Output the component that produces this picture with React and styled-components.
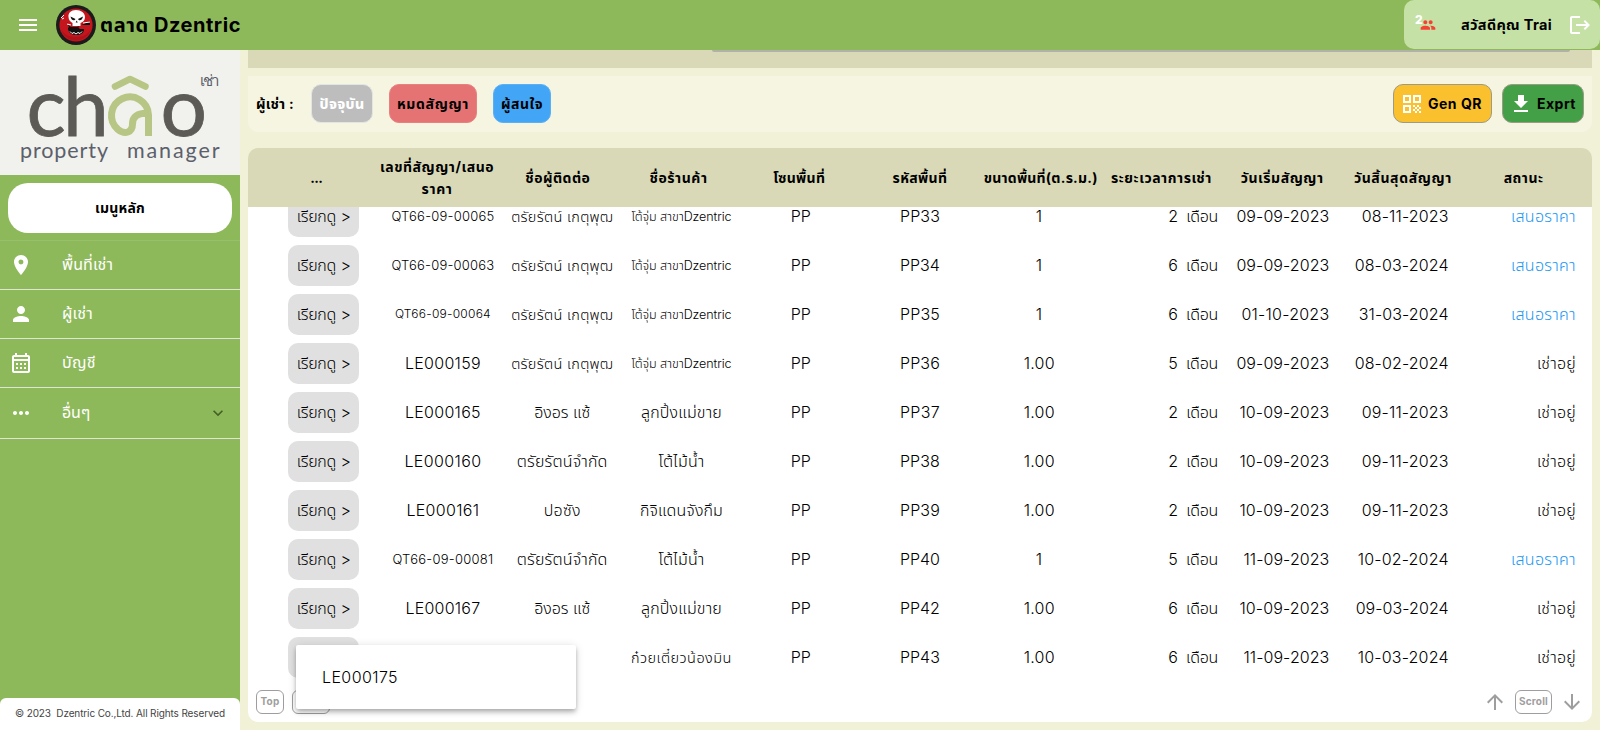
import React, { useLayoutEffect, useRef, useState } from 'react';
import styled, { createGlobalStyle } from 'styled-components';
import {
  MdMenu, MdLocationOn, MdPerson, MdOutlineCalendarMonth, MdMoreHoriz, MdExpandMore,
  MdPeople, MdLogout, MdQrCode, MdDownload, MdArrowUpward, MdArrowDownward,
} from 'react-icons/md';

const Global = createGlobalStyle`
  * { box-sizing: border-box; }
  body {
    margin: 0;
    background: #f1f1d7;
    font-family: Inter, "Noto Sans Thai", "Noto Sans", sans-serif;
    color: #000;
    overflow: hidden;
  }
`;

/* Text that tightens or loosens its tracking to fill the given width. */
const Tracked = styled.span`
  display: inline-block;
  white-space: pre;
  font-size: ${(p) => p.$size || 16}px;
  font-weight: ${(p) => p.$weight || 300};
  color: ${(p) => p.$color || 'inherit'};
  line-height: ${(p) => p.$line || 1.2};
`;

function Text({ w, size, weight, color, line, children }) {
  const ref = useRef(null);
  const [gap, setGap] = useState(0);
  useLayoutEffect(() => {
    if (!w) return;
    const el = ref.current;
    el.style.letterSpacing = '0px';
    const base = el.getBoundingClientRect().width;
    el.style.letterSpacing = '1px';
    const slope = el.getBoundingClientRect().width - base;
    const next = slope > 0 ? (w - base) / slope : 0;
    el.style.letterSpacing = `${next}px`;
    setGap(next);
  }, [w, children, size, weight]);
  return (
    <Tracked ref={ref} $size={size} $weight={weight} $color={color} $line={line}
      style={{ letterSpacing: `${gap}px` }}>
      {children}
    </Tracked>
  );
}

const Page = styled.div`
  display: flex;
  flex-direction: column;
  width: 1600px;
  height: 730px;
  overflow: hidden;
`;

const TopBar = styled.header`
  display: flex;
  align-items: center;
  height: 50px;
  flex: none;
  padding-left: 16px;
  background: #8eb95b;
  color: #fff;
`;

const Brand = styled.div`
  display: flex;
  align-items: center;
  gap: 4px;
  margin-left: 16px;
  color: #000;
`;

const UserBox = styled.div`
  display: flex;
  align-items: center;
  align-self: flex-start;
  width: 196px;
  height: 49px;
  margin-left: auto;
  padding: 0 8px 0 11px;
  border-radius: 10px;
  background: #c5e1a5;
  color: #000;
`;

const Online = styled.div`
  display: flex;
  align-items: center;
  width: 46px;
  color: #fff;
  svg { color: #f44336; }
`;

const Count = styled.span`
  width: 5px;
  margin-bottom: 10px;
  font-size: 12px;
  font-weight: 800;
`;

const LogoutSlot = styled.div`
  display: flex;
  margin-left: auto;
  color: #fff;
`;

const Body = styled.div`
  display: flex;
  flex: 1;
  min-height: 0;
`;

const Sidebar = styled.aside`
  display: flex;
  flex-direction: column;
  width: 240px;
  flex: none;
  background: #8eb95b;
`;

const LogoPanel = styled.div`
  height: 125px;
  background: #f1f2ed;
`;

const MainMenu = styled.div`
  display: flex;
  align-items: center;
  justify-content: center;
  height: 50px;
  margin: 8px 8px 7px;
  padding-top: 1px;
  border-radius: 20px;
  background: #fff;
`;

const NavItem = styled.div`
  display: flex;
  align-items: center;
  height: ${(p) => p.$height || 49}px;
  padding: 0 13px 0 12px;
  border-bottom: 1px solid #dfe6d5;
  color: #fff;
`;

const NavIcon = styled.div`
  display: flex;
  justify-content: center;
  width: 24px;
  margin: 0 29px 1px -3px;
`;

const NavArrow = styled.div`
  display: flex;
  margin-left: auto;
  margin-right: -1px;
  color: #456026;
`;

const NavList = styled.nav`
  border-top: 1px solid #98c06a;
`;

const Copyright = styled.footer`
  display: flex;
  align-items: center;
  height: 32px;
  margin-top: auto;
  padding: 0 0 2px 15px;
  border-radius: 6px 6px 0 0;
  background: #fff;
`;

const Content = styled.main`
  display: flex;
  flex-direction: column;
  flex: 1;
  min-width: 0;
  padding: 0 8px 8px;
`;

const SearchStrip = styled.div`
  display: flex;
  justify-content: flex-end;
  height: 17.5px;
  padding-right: 22px;
  background: #d9d9b7;
`;

const SearchEdge = styled.div`
  width: 858px;
  height: 1.5px;
  border-radius: 0 0 4px 4px;
  background: #b0b2a8;
`;

const FilterBar = styled.section`
  display: flex;
  align-items: center;
  height: 56px;
  margin-top: 8px;
  padding: 0 8px;
  border-radius: 0 0 10px 10px;
  background: #f6f5e2;
`;

const FilterLabel = styled.div`
  display: flex;
  padding-top: 2px;
`;

const Chips = styled.div`
  display: flex;
  gap: 16px;
  margin-left: 17px;
`;

const Chip = styled.div`
  display: flex;
  align-items: center;
  justify-content: center;
  width: ${(p) => p.$width}px;
  height: 39px;
  padding-top: 2px;
  border: 1px solid ${(p) => p.$edge};
  border-radius: 10px;
  background: ${(p) => p.$fill};
`;

const Actions = styled.div`
  display: flex;
  gap: 10px;
  margin-left: auto;
`;

const ActionButton = styled.div`
  display: flex;
  align-items: center;
  gap: 4px;
  width: ${(p) => p.$width}px;
  height: 39px;
  padding: 1px 0 0 6px;
  border: 1px solid #9b9b86;
  border-radius: 10px;
  background: ${(p) => p.$fill};
  svg { color: #fff; }
`;

const TableHead = styled.div`
  display: grid;
  grid-template-columns: repeat(11, 1fr);
  align-items: center;
  height: 59.5px;
  flex: none;
  margin-top: 16px;
  padding: 1px 8px 0;
  border-radius: 10px 10px 0 0;
  background: #d9d9b7;
`;

const HeadCell = styled.div`
  display: flex;
  flex-direction: column;
  align-items: center;
`;

const TableBody = styled.div`
  flex: 1;
  min-height: 0;
  overflow: hidden;
  background: #fff;
`;

const Rows = styled.div`
  margin-top: -15px;
`;

const Row = styled.div`
  display: grid;
  grid-template-columns: repeat(11, 119.27px);
  align-items: center;
  height: 49px;
  padding: 0 16px;
`;

const Cell = styled.div`
  display: flex;
  align-items: center;
  justify-content: ${(p) => p.$align || 'center'};
  padding-right: ${(p) => p.$inset || 0}px;
`;

const ViewButton = styled.div`
  display: flex;
  align-items: center;
  justify-content: center;
  width: 71px;
  height: 41px;
  border-radius: 10px;
  background: #e0e0e0;
`;

const TableFoot = styled.div`
  display: flex;
  align-items: center;
  gap: 8px;
  height: 42px;
  flex: none;
  padding: 1px 8px 0;
  border-radius: 0 0 10px 10px;
  background: #fff;
  color: #9e9e9e;
`;

const FootButton = styled.div`
  display: flex;
  align-items: center;
  justify-content: center;
  width: ${(p) => p.$width}px;
  height: 24px;
  padding-bottom: 1px;
  border: 1px solid #9e9e9e;
  border-radius: 6px;
`;

const ScrollGroup = styled.div`
  display: flex;
  align-items: center;
  gap: 8px;
  margin-left: auto;
`;

const Popup = styled.div`
  position: absolute;
  left: 296px;
  top: 645px;
  display: flex;
  align-items: center;
  width: 280px;
  height: 64px;
  padding: 2px 0 0 26px;
  border-radius: 2px;
  background: #fff;
  box-shadow: 0 2px 4px -1px rgba(0,0,0,.2), 0 4px 5px rgba(0,0,0,.14), 0 1px 10px rgba(0,0,0,.12);
`;

const headers = [
  [['...', 12]],
  [['เลขที่สัญญา/เสนอ', 114], ['ราคา', 31]],
  [['ชื่อผู้ติดต่อ', 65]],
  [['ชื่อร้านค้า', 58]],
  [['โซนพื้นที่', 52]],
  [['รหัสพื้นที่', 55]],
  [['ขนาดพื้นที่(ต.ร.ม.)', 114]],
  [['ระยะเวลาการเช่า', 101]],
  [['วันเริ่มสัญญา', 83]],
  [['วันสิ้นสุดสัญญา', 98]],
  [['สถานะ', 40]],
];

const TRAI = ['ตรัยรัตน์ เกตุพุฒ', 102, 14.5];
const DZEN = ['โต้จุ่ม สาขาDzentric', 100, 12.5];
const INGON = ['อิงอร แซ้', 56, 16];
const LUK = ['ลูกปิ้งแม่ขาย', 81, 16];
const LTD = ['ตรัยรัตน์จำกัด', 91, 16];
const MAI = ['โต้ไม้น้ำ', 46, 16];

const rows = [
  { no: ['QT66-09-00065', 103, 13], name: TRAI, shop: DZEN, code: 'PP33', area: '1', months: 2, start: ['09-09-2023', 93], end: ['08-11-2023', 87], quote: true },
  { no: ['QT66-09-00063', 103, 13], name: TRAI, shop: DZEN, code: 'PP34', area: '1', months: 6, start: ['09-09-2023', 93], end: ['08-03-2024', 94], quote: true },
  { no: ['QT66-09-00064', 96, 12], name: TRAI, shop: DZEN, code: 'PP35', area: '1', months: 6, start: ['01-10-2023', 88], end: ['31-03-2024', 90], quote: true },
  { no: ['LE000159', 76], name: TRAI, shop: DZEN, code: 'PP36', area: '1.00', months: 5, start: ['09-09-2023', 93], end: ['08-02-2024', 94] },
  { no: ['LE000165', 76], name: INGON, shop: LUK, code: 'PP37', area: '1.00', months: 2, start: ['10-09-2023', 90], end: ['09-11-2023', 87] },
  { no: ['LE000160', 77], name: LTD, shop: MAI, code: 'PP38', area: '1.00', months: 2, start: ['10-09-2023', 90], end: ['09-11-2023', 87] },
  { no: ['LE000161', 73], name: ['ปอซัง', 37, 16], shop: ['กิจิแดนจังกึม', 83, 16], code: 'PP39', area: '1.00', months: 2, start: ['10-09-2023', 90], end: ['09-11-2023', 87] },
  { no: ['QT66-09-00081', 101, 13], name: LTD, shop: MAI, code: 'PP40', area: '1', months: 5, start: ['11-09-2023', 86], end: ['10-02-2024', 91], quote: true },
  { no: ['LE000167', 75], name: INGON, shop: LUK, code: 'PP42', area: '1.00', months: 6, start: ['10-09-2023', 90], end: ['09-03-2024', 93] },
  { no: ['LE000175', 76], name: null, shop: ['ก๋วยเตี๋ยวน้องมิน', 101, 14.5], code: 'PP43', area: '1.00', months: 6, start: ['11-09-2023', 86], end: ['10-03-2024', 91] },
];

function SkullBadge() {
  return (
    <svg width="40" height="40" viewBox="0 0 40 40">
      <circle cx="20" cy="20" r="20" fill="#1b1b1b" />
      <circle cx="20" cy="20" r="16.600" fill="#c5161d" />
      <path d="M5 24a15.500 15.500 0 0 0 30 0c-3 5-7 8-15 8S8 29 5 24z" fill="#b0121a" />
      <path d="M11 17c1 3 3 5 5 5h5l13-6v4h-9c-3 1-3 3-1 4h4c0 4-3 6-8 6s-8-3-8-7l1-1-2-4z" fill="#111" />
      <path d="M20 5c-5 0-8 3-7.500 7 0 3 2 5 4 6v3h8v-3c3-1 4.500-3 4.500-6 0-4-4-7-9-7z" fill="#fff" />
      <path d="M14.500 11.500l5 2.500c-1 2-4 2-5-2.500zM27 11.500l-5 2.500c1 2 4 2 5-2.500zM20.700 15.500l1 2h-2z" fill="#111" />
      <path d="M14 26.500l2 2 2-1 2 1.500 2-1.500 2 1 2-2M5 13l3-3M6 14l2-1M11 19l4 1M27 18l7-1" stroke="#fff" strokeWidth="1" fill="none" />
    </svg>
  );
}

function ChaoLogo() {
  return (
    <svg width="240" height="125" viewBox="0 0 240 125" fill="none">
      <g fill="#5c5b55" fontFamily="Lato" fontSize="82" stroke="#5c5b55" strokeWidth="0.8">
        <text x="26.500" y="86">c</text>
        <text x="63" y="86">h</text>
        <text x="160.500" y="86">o</text>
      </g>
      <path d="M115 36.500 130 29l15.500 7.500" stroke="#b7c684" strokeWidth="6.500" strokeLinecap="round" strokeLinejoin="round" />
      <path d="M148.500 86V65a18.500 18.500 0 1 0-30.500 14.500c7 5.500 14.500 3 14.500-5.500 0-7 4-11 16-11" stroke="#b7c684" strokeWidth="7" />
      <g fill="#5b606b" fontFamily="Lato">
        <text x="20" y="107.500" fontSize="21.500" textLength="88">property</text>
        <text x="127" y="107.500" fontSize="21.500" textLength="92.500">manager</text>
        <text x="200" y="36" fontSize="15" fontWeight="300" textLength="19">เช่า</text>
      </g>
    </svg>
  );
}

const nav = [
  { icon: MdLocationOn, label: 'พื้นที่เช่า', w: 51 },
  { icon: MdPerson, label: 'ผู้เช่า', w: 31 },
  { icon: MdOutlineCalendarMonth, label: 'บัญชี', w: 34 },
  { icon: MdMoreHoriz, label: 'อื่นๆ', w: 28, more: true },
];

export default function App() {
  return (
    <>
      <Global />
      <Page>
        <TopBar>
          <MdMenu size={24} />
          <Brand>
            <SkullBadge />
            <Text w={141} size={20} weight={700}>ตลาด Dzentric</Text>
          </Brand>
          <UserBox>
            <Online>
              <Count>2</Count>
              <MdPeople size={16} />
            </Online>
            <Text w={91} size={14.5} weight={700}>สวัสดีคุณ Trai</Text>
            <LogoutSlot><MdLogout size={24} /></LogoutSlot>
          </UserBox>
        </TopBar>
        <Body>
          <Sidebar>
            <LogoPanel><ChaoLogo /></LogoPanel>
            <MainMenu><Text w={50} size={14} weight={700}>เมนูหลัก</Text></MainMenu>
            <NavList>
              {nav.map(({ icon: Icon, label, w, more }) => (
                <NavItem key={label} $height={more ? 51 : 49}>
                  <NavIcon><Icon size={24} /></NavIcon>
                  <Text w={w} size={16} weight={450}>{label}</Text>
                  {more && <NavArrow><MdExpandMore size={20} /></NavArrow>}
                </NavItem>
              ))}
            </NavList>
            <Copyright>
              <Text w={210} size={10} weight={400} color="#444">{'© 2023  Dzentric Co.,Ltd. All Rights Reserved'}</Text>
            </Copyright>
          </Sidebar>
          <Content>
            <SearchStrip><SearchEdge /></SearchStrip>
            <FilterBar>
              <FilterLabel><Text w={38} size={14} weight={700}>ผู้เช่า :</Text></FilterLabel>
              <Chips>
                <Chip $width={62} $fill="#bdbdbd" $edge="#e4e4e4"><Text w={45} size={14} weight={800} color="#fff">ปัจจุบัน</Text></Chip>
                <Chip $width={88} $fill="#e57373" $edge="#e88080"><Text w={72} size={14} weight={700}>หมดสัญญา</Text></Chip>
                <Chip $width={58} $fill="#42a5f5" $edge="#5bb0f5"><Text w={42} size={14} weight={700}>ผู้สนใจ</Text></Chip>
              </Chips>
              <Actions>
                <ActionButton $width={99} $fill="#fbc02d"><MdQrCode size={24} /><Text w={54} size={14} weight={700}>Gen QR</Text></ActionButton>
                <ActionButton $width={82} $fill="#43a047"><MdDownload size={24} /><Text w={39} size={14} weight={700}>Exprt</Text></ActionButton>
              </Actions>
            </FilterBar>
            <TableHead>
              {headers.map((lines) => (
                <HeadCell key={lines[0][0]}>
                  {lines.map(([t, w]) => <Text key={t} w={w} size={14} weight={700} line={1.57}>{t}</Text>)}
                </HeadCell>
              ))}
            </TableHead>
            <TableBody>
              <Rows>
                {rows.map((r) => (
                  <Row key={r.code}>
                    <Cell><ViewButton><Text w={54} size={16}>{'เรียกดู >'}</Text></ViewButton></Cell>
                    <Cell><Text w={r.no[1]} size={r.no[2]}>{r.no[0]}</Text></Cell>
                    <Cell>{r.name && <Text w={r.name[1]} size={r.name[2]}>{r.name[0]}</Text>}</Cell>
                    <Cell><Text w={r.shop[1]} size={r.shop[2]}>{r.shop[0]}</Text></Cell>
                    <Cell><Text w={20}>PP</Text></Cell>
                    <Cell><Text w={40}>{r.code}</Text></Cell>
                    <Cell><Text w={r.area === '1' ? 7 : 31}>{r.area}</Text></Cell>
                    <Cell $align="flex-end"><Text w={50}>{`${r.months}  เดือน`}</Text></Cell>
                    <Cell $align="flex-end" $inset={8}><Text w={r.start[1]}>{r.start[0]}</Text></Cell>
                    <Cell $align="flex-end" $inset={8}><Text w={r.end[1]}>{r.end[0]}</Text></Cell>
                    <Cell $align="flex-end">
                      {r.quote
                        ? <Text w={65} weight={350} color="#2196f3">เสนอราคา</Text>
                        : <Text w={39}>เช่าอยู่</Text>}
                    </Cell>
                  </Row>
                ))}
              </Rows>
            </TableBody>
            <TableFoot>
              <FootButton $width={28}><Text w={19} size={10} weight={700}>Top</Text></FootButton>
              <FootButton $width={38} />
              <ScrollGroup>
                <MdArrowUpward size={24} />
                <FootButton $width={37}><Text w={29} size={10} weight={700}>Scroll</Text></FootButton>
                <MdArrowDownward size={24} />
              </ScrollGroup>
            </TableFoot>
          </Content>
        </Body>
      </Page>
      <Popup><Text w={76}>LE000175</Text></Popup>
    </>
  );
}
